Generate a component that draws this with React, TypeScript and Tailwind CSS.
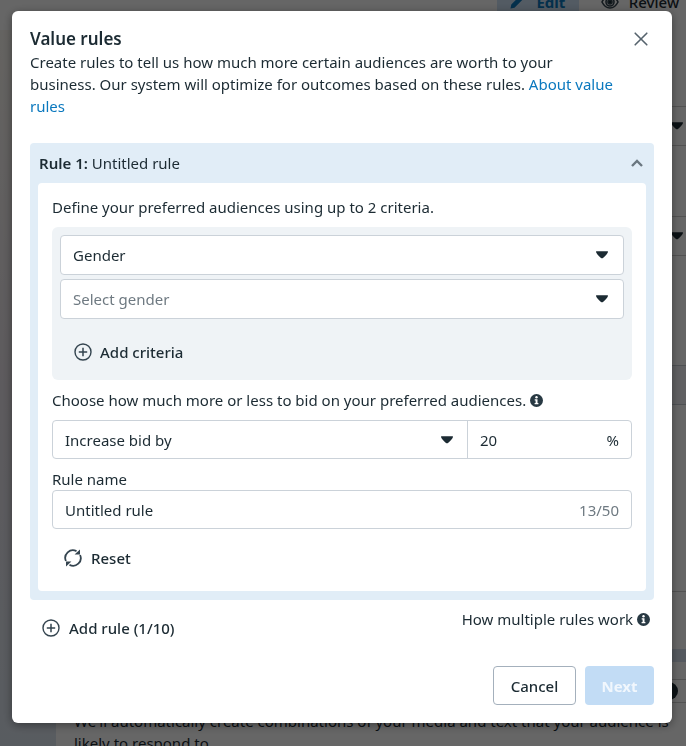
import React, { useState } from 'react';

const inputBorder = 'border border-[#cbd2d9] rounded bg-white';

const CaretIcon = ({ className = '' }: { className?: string }) => (
    <svg className={`pointer-events-none ${className}`} width="12" height="8" viewBox="0 0 12 8" aria-hidden="true">
        <path d="M.4.3h11.2c.4 0 .5.5.3.9-.8 1.900-2.500 3.600-4.900 5.700-.6.5-1.400.5-2 0C2.600 4.800.9 3.100.1 1.200c-.2-.4-.1-.9.3-.9z" fill="#1c2b33" />
    </svg>
);

const PlusCircleIcon = () => (
    <svg width="18" height="18" viewBox="0 0 18 18" fill="none" stroke="#34444f" aria-hidden="true">
        <circle cx="9" cy="9" r="8" strokeWidth="1.4" />
        <path d="M9 4.800v8.400M4.800 9h8.400" strokeWidth="1.5" />
    </svg>
);

const InfoIcon = () => (
    <svg className="inline-block align-[-1px]" width="13" height="13" viewBox="0 0 13 13" aria-hidden="true">
        <circle cx="6.5" cy="6.5" r="6.5" fill="#283943" />
        <circle cx="6.5" cy="3.2" r="1.2" fill="#fff" />
        <path d="M4.700 5.200h2.800v3.900h.9v1.200H4.600V9.100h1V6.400h-.9z" fill="#fff" />
    </svg>
);

const ResetIcon = () => (
    <svg width="18" height="18" viewBox="0 0 18 18" fill="none" stroke="#34444f" strokeWidth="1.8" aria-hidden="true">
        <path d="M1.900 12A7.700 7.700 0 0 1 12.500 2.100M16.100 6A7.700 7.700 0 0 1 5.500 15.900" />
        <path d="M10.600 5.400h5.400V.6z" fill="#34444f" stroke="none" />
        <path d="M7.400 12.600H2v4.800z" fill="#34444f" stroke="none" />
    </svg>
);

const Page = () => (
    <div aria-hidden="true" className="h-screen overflow-hidden bg-white">
        <div className="flex h-[30px] items-start justify-end gap-[22px] pr-[7px] text-[15px] leading-[22px]">
            <div className="-mt-3.5 flex h-8 w-[82px] items-center justify-center gap-3 bg-[#cfe3f7] font-bold text-[#0a78be]">
                <svg width="14" height="14" viewBox="0 0 14 14" fill="#0a78be">
                    <path d="M0.500 13.500l.8-4L9 1.800l3.200 3.200-7.700 7.700zM10 .9l.7-.6c.5-.5 1.200-.5 1.700 0l1.300 1.300c.5.5.5 1.200 0 1.700l-.6.7z" />
                </svg>
                Edit
            </div>
            <div className="-mt-3.5 flex h-8 items-center gap-2.5 font-medium text-[#1c2b33]">
                <svg width="18" height="14" viewBox="0 0 18 14" fill="none" stroke="#34444f" strokeWidth="1.6">
                    <path d="M1 7c2-4 5-6 8-6s6 2 8 6c-2 4-5 6-8 6s-6-2-8-6z" />
                    <circle cx="9" cy="7" r="4" />
                    <circle cx="9" cy="7" r="2" fill="#1c2b33" />
                </svg>
                Review
            </div>
        </div>
        <div className="flex">
            <div className="h-[716px] w-14 shrink-0 bg-linear-to-b from-[#fbf8f2] via-[#e9e3ea] to-[#dde6f0]" />
            <div className="flex-1 text-[#1c2b33]">
                <div className="mt-[76px] flex h-10 items-center justify-end border-y border-[#ccc] pr-[3px]">
                    <CaretIcon />
                </div>
                <div className="mt-[70px] flex h-10 items-center justify-end border-y border-[#ccc] pr-[3px]">
                    <CaretIcon />
                </div>
                <div className="mt-[109px] h-10 border-y border-[#c4cad0] bg-[#eff0f4]" />
                <div className="mt-[186px] border-t border-[#ccc]" />
                <div className="mt-[57px] h-[13px] bg-[#d5dfed]" />
                <div className="mt-[17px] flex h-6 items-center justify-end border-y border-[#ccc] pr-2">
                    <div className="size-[18px] rounded-full bg-[#1c2b33]" />
                </div>
                <p className="mt-[7px] pr-3 pl-[18px] text-[15px] leading-[22px]">
                    We'll automatically create combinations of your media and text that your audience is likely to respond to
                </p>
            </div>
        </div>
    </div>
);

const App: React.FC = () => {
    const [name, setName] = useState('Untitled rule');

    return (
        <div className="font-['Noto_Sans','Open_Sans',sans-serif] text-[15px] leading-[22px] text-[#1c2b33]">
            <Page />
            <div className="fixed inset-0 overflow-hidden bg-black/60 pt-[11px] pr-3.5 pl-3">
                <div role="dialog" aria-labelledby="title" className="rounded-md bg-white px-[18px] pt-4 pb-[18px] shadow-[0_2px_10px_rgba(0,0,0,0.4)]">
                    <div className="flex items-center justify-between pr-1.5">
                        <h2 id="title" className="text-[17px] leading-6 font-semibold">Value rules</h2>
                        <button type="button" aria-label="Close">
                            <svg width="14" height="14" viewBox="0 0 14 14" stroke="#56636d" strokeWidth="1.6" strokeLinecap="round">
                                <path d="M1.200 1.200l11.600 11.600M12.800 1.200L1.200 12.800" />
                            </svg>
                        </button>
                    </div>
                    <p className="pr-8">
                        Create rules to tell us how much more certain audiences are worth to your business. Our system will optimize for outcomes based on these rules.{' '}
                        <a href="#about" className="text-[#0a78be]">About value rules</a>
                    </p>

                    <div className="mt-[26px] rounded bg-[#e1edf7] px-2 pb-[9px]">
                        <button type="button" className="flex h-10 w-full items-center justify-between pr-[3px] pl-px">
                            <span><span className="font-semibold">Rule 1:</span> Untitled rule</span>
                            <svg width="12" height="8" viewBox="0 0 12 8" fill="none" stroke="#6b7780" strokeWidth="2.400" aria-hidden="true">
                                <path d="M1 7l5-5 5 5" />
                            </svg>
                        </button>
                        <div className="rounded bg-white px-3.5 pt-[13px] pb-3">
                            <p>Define your preferred audiences using up to 2 criteria.</p>
                            <div className="mt-[9px] rounded-md bg-[#eff3f6] p-2">
                                <div className="grid gap-1">
                                    <div className="relative">
                                        <select aria-label="Criteria" className={`${inputBorder} h-10 w-full appearance-none px-3`}>
                                            <option>Gender</option>
                                        </select>
                                        <CaretIcon className="absolute top-4 right-4" />
                                    </div>
                                    <div className="relative">
                                        <select aria-label="Gender" className={`${inputBorder} h-10 w-full appearance-none px-3 text-[#6f7a82]`}>
                                            <option>Select gender</option>
                                        </select>
                                        <CaretIcon className="absolute top-4 right-4" />
                                    </div>
                                </div>
                                <button type="button" className="mt-[13px] flex h-10 items-center gap-2 px-3.5 font-medium">
                                    <PlusCircleIcon />
                                    Add criteria
                                </button>
                            </div>

                            <p className="mt-[9px]">
                                Choose how much more or less to bid on your preferred audiences. <InfoIcon />
                            </p>
                            <div className={`${inputBorder} mt-[9px] flex h-[39px]`}>
                                <div className="relative flex-1 border-r border-[#cbd2d9]">
                                    <select aria-label="Bid adjustment" className="h-full w-full appearance-none px-3">
                                        <option>Increase bid by</option>
                                    </select>
                                    <CaretIcon className="absolute top-[15px] right-3.5" />
                                </div>
                                <label className="flex w-[163px] items-center px-3">
                                    <input type="text" aria-label="Bid percentage" defaultValue="20" className="w-full min-w-0 outline-none" />
                                    %
                                </label>
                            </div>

                            <label htmlFor="rule-name" className="mt-[9px] block">Rule name</label>
                            <div className={`${inputBorder} flex h-[39px] items-center px-3`}>
                                <input
                                    id="rule-name"
                                    type="text"
                                    maxLength={50}
                                    value={name}
                                    onChange={(e) => setName(e.target.value)}
                                    className="w-full min-w-0 outline-none"
                                />
                                <span className="text-[#6f7a82]">{name.length}/50</span>
                            </div>
                            <button type="button" className="mt-[9px] mb-px flex h-10 items-center gap-[9px] px-3 font-medium">
                                <ResetIcon />
                                Reset
                            </button>
                        </div>
                    </div>

                    <div className="mt-2 flex items-start justify-between">
                        <button type="button" className="flex h-10 items-center gap-[9px] px-3 font-medium">
                            <PlusCircleIcon />
                            Add rule (1/10)
                        </button>
                        <p className="pr-1">How multiple rules work <InfoIcon /></p>
                    </div>
                    <div className="mt-[18px] flex justify-end gap-[9px]">
                        <button type="button" className="h-[39px] w-[83px] rounded border border-[#a4b0bc] font-medium">Cancel</button>
                        <button type="button" disabled className="h-[39px] w-[69px] rounded bg-[#c2dcf5] font-bold text-[#f1f7fd]">Next</button>
                    </div>
                </div>
            </div>
        </div>
    );
};

export default App;
